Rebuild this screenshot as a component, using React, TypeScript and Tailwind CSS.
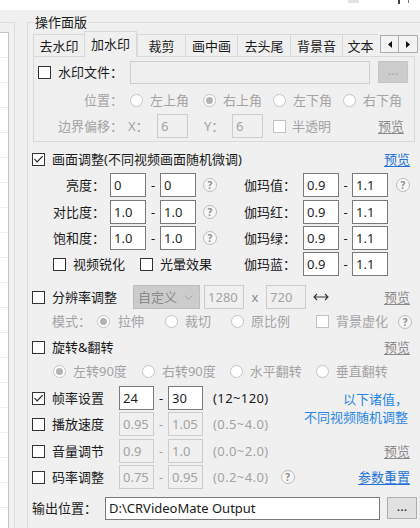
import React from 'react';

const FONT = "font-['Noto_Sans','Noto_Sans_CJK_SC',sans-serif]";

function Check({ checked = false, disabled = false }: { checked?: boolean; disabled?: boolean }) {
  return (
    <span className={`flex h-[13px] w-[13px] shrink-0 items-center justify-center border bg-white ${disabled ? 'border-[#c2c2c2]' : 'border-[#333333]'}`}>
      {checked && (
        <svg width="11" height="11" viewBox="0 0 11 11">
          <path d="M1.5 5.2 L4.2 8 L9.6 2.2" fill="none" stroke="#222" strokeWidth="1.2" />
        </svg>
      )}
    </span>
  );
}

function Radio({ on = false }: { on?: boolean }) {
  return (
    <span className="flex h-[13px] w-[13px] shrink-0 items-center justify-center rounded-full border border-[#c4c4c4] bg-white">
      {on && <span className="h-[7px] w-[7px] rounded-full bg-[#b3b3b3]" />}
    </span>
  );
}

function Help() {
  return (
    <span className="flex h-[14px] w-[14px] shrink-0 items-center justify-center rounded-full border border-[#bdbdbd] bg-[#f7f7f7] text-[10px] font-bold text-[#8c8c8c]">?</span>
  );
}

function Field({ v, className = '', dis = false }: { v: string; className?: string; dis?: boolean }) {
  return (
    <span
      className={`flex h-[24px] shrink-0 items-center border pl-[3px] ${
        dis ? 'border-[#cccccc] bg-[#f0f0f0] text-[#a3a3a3]' : 'border-[#7a7a7a] bg-white text-[#1f1f1f]'
      } ${className}`}
    >
      {v}
    </span>
  );
}

function Preview({ blue = false }: { blue?: boolean }) {
  return <span className={`ml-auto mr-[10px] underline underline-offset-2 ${blue ? 'text-[#1f74d6]' : 'text-[#8a8a8a]'}`}>预览</span>;
}

const tabs = [
  { name: '去水印', w: 'w-[51px]' },
  { name: '加水印', w: 'w-[53px]', on: true },
  { name: '裁剪', w: 'w-[48px]' },
  { name: '画中画', w: 'w-[52px]' },
  { name: '去头尾', w: 'w-[53px]' },
  { name: '背景音', w: 'w-[52px]' },
  { name: '文本', w: 'w-[36px]' },
];

const colorRows = [
  { a: '亮度：', a1: '0', a2: '0', b: '伽玛值：' },
  { a: '对比度：', a1: '1.0', a2: '1.0', b: '伽玛红：' },
  { a: '饱和度：', a1: '1.0', a2: '1.0', b: '伽玛绿：' },
];

function RangeRow({ label, v1, v2, range, on = false }: { label: string; v1: string; v2: string; range: string; on?: boolean }) {
  return (
    <>
      <Check checked={on} />
      <span className="ml-[7px] w-[52px]">{label}</span>
      <Field v={v1} dis={!on} className="ml-[15px] w-[35px]" />
      <span className={`w-[14px] text-center ${on ? '' : 'text-[#a3a3a3]'}`}>-</span>
      <Field v={v2} dis={!on} className="w-[35px]" />
      <span className={`ml-[10px] tracking-[0.4px] ${on ? '' : 'text-[#a3a3a3]'}`}>{range}</span>
    </>
  );
}

export default function App() {
  return (
    <div className={`relative flex h-[528px] w-[420px] flex-col overflow-hidden bg-[#f0f0f0] text-[13px] leading-none text-[#1a1a1a] ${FONT}`}>
      <div className="relative h-[10px] shrink-0 bg-white">
        <span className="absolute left-[348px] top-0 h-[3px] w-[11px] bg-[#e3e3e3]" />
        <span className="absolute left-[398px] top-0 h-[4px] w-[2px] bg-[#444444]" />
        <span className="absolute left-[408px] top-0 h-[3px] w-[1px] bg-[#777777]" />
      </div>

      <div className="flex flex-1 pt-[12px]">
        {/* left group with list */}
        <div className="w-[15px] shrink-0 border-r border-t border-[#dcdcdc] pt-[9px]">
          <div className="h-full w-[9px] overflow-hidden border-r border-t border-[#c4c4c4] bg-white">
            {Array.from({ length: 20 }).map((_, i) => (
              <div key={i} className="h-[25px] border-b border-[#ececec]" />
            ))}
          </div>
        </div>

        {/* 操作面版 group */}
        <div className="relative ml-[12px] flex flex-1 flex-col border-l border-t border-[#dcdcdc] pl-[4px] pt-[8px]">
          <span className="absolute left-[6px] top-[-9px] bg-[#f0f0f0] px-[1px] leading-[16px]">操作面版</span>

          {/* tabs */}
          <div className="ml-[1px] flex h-[25px] items-end">
            {tabs.map((t) =>
              t.on ? (
                <span key={t.name} className={`relative z-10 mb-[-1px] flex h-[26px] items-center justify-center border-x border-t border-[#d9d9d9] bg-[#f0f0f0] pb-[1px] ${t.w}`}>
                  {t.name}
                </span>
              ) : (
                <span key={t.name} className={`flex h-[22px] items-center justify-center border-l border-t border-[#d9d9d9] bg-[#f0f0f0] pt-[2px] ${t.w}`}>
                  {t.name}
                </span>
              ),
            )}
            <div className="mb-[3px] ml-[2px] flex self-end">
              <span className="flex h-[18px] w-[19px] items-center justify-center border border-[#adadad] bg-[#f3f3f3]">
                <svg width="4" height="7" viewBox="0 0 4 7">
                  <path d="M4 0 L0 3.5 L4 7 Z" fill="#111" />
                </svg>
              </span>
              <span className="flex h-[18px] w-[19px] items-center justify-center border border-l-0 border-[#adadad] bg-[#f3f3f3]">
                <svg width="4" height="7" viewBox="0 0 4 7">
                  <path d="M0 0 L4 3.5 L0 7 Z" fill="#111" />
                </svg>
              </span>
            </div>
          </div>

          {/* tab panel */}
          <div className="ml-[1px] flex h-[86px] w-[382px] flex-col border border-[#d9d9d9] pl-[4px] pt-[3px]">
            <div className="flex h-[24px] items-center">
              <Check />
              <span className="ml-[7px] w-[65px]">水印文件：</span>
              <span className="ml-[7px] h-[23px] w-[240px] border border-[#d0d0d0] bg-[#f0f0f0]" />
              <span className="ml-[8px] flex h-[22px] w-[30px] items-center justify-center border border-[#c4c4c4] bg-[#cccccc] pb-[3px] text-[#a8a8a8]">...</span>
            </div>
            <div className="mt-[4px] flex h-[24px] items-center text-[#a3a3a3]">
              <span className="w-[85px] text-right">位置：</span>
              <span className="ml-[7px] flex w-[73px] items-center gap-[7px]">
                <Radio />
                左上角
              </span>
              <span className="flex w-[70px] items-center gap-[7px]">
                <Radio on />
                右上角
              </span>
              <span className="flex w-[70px] items-center gap-[7px]">
                <Radio />
                左下角
              </span>
              <span className="flex items-center gap-[7px]">
                <Radio />
                右下角
              </span>
            </div>
            <div className="mt-[2px] flex h-[24px] items-center text-[#a3a3a3]">
              <span className="w-[85px] text-right">边界偏移：</span>
              <span className="ml-[5px] w-[29px]">X：</span>
              <Field v="6" dis className="h-[23px] w-[31px]" />
              <span className="ml-[16px] w-[28px]">Y：</span>
              <Field v="6" dis className="h-[23px] w-[31px]" />
              <span className="ml-[10px]">
                <Check disabled />
              </span>
              <span className="ml-[6px]">半透明</span>
              <Preview />
            </div>
          </div>

          {/* 画面调整 */}
          <div className="mt-[5px] flex h-[24px] items-center">
            <Check checked />
            <span className="ml-[7px]">画面调整(不同视频画面随机微调)</span>
            <Preview blue />
          </div>

          {colorRows.map((r, i) => (
            <div key={r.a} className={`flex h-[24px] items-center ${i === 0 ? 'mt-[2px]' : i === 1 ? 'mt-[3px]' : 'mt-[2px]'}`}>
              <div className="flex w-[212px] items-center">
                <span className="w-[73px] text-right">{r.a}</span>
                <Field v={r.a1} className="ml-[5px] w-[36px]" />
                <span className="w-[14px] text-center">-</span>
                <Field v={r.a2} className="w-[36px]" />
                <span className="ml-[7px]">
                  <Help />
                </span>
              </div>
              <span className="w-[52px] text-right">{r.b}</span>
              <Field v="0.9" className="ml-[7px] w-[36px]" />
              <span className="w-[13px] text-center">-</span>
              <Field v="1.1" className="w-[36px]" />
              {i === 0 && (
                <span className="ml-[8px]">
                  <Help />
                </span>
              )}
            </div>
          ))}

          <div className="mt-[2px] flex h-[24px] items-center">
            <div className="flex w-[212px] items-center">
              <span className="ml-[21px]">
                <Check />
              </span>
              <span className="ml-[7px]">视频锐化</span>
              <span className="ml-[15px]">
                <Check />
              </span>
              <span className="ml-[7px]">光暈效果</span>
            </div>
            <span className="w-[52px] text-right">伽玛蓝：</span>
            <Field v="0.9" className="ml-[7px] w-[36px]" />
            <span className="w-[13px] text-center">-</span>
            <Field v="1.1" className="w-[36px]" />
          </div>

          {/* 分辨率 */}
          <div className="mt-[9px] flex h-[24px] items-center">
            <Check />
            <span className="ml-[7px]">分辨率调整</span>
            <span className="ml-[16px] flex h-[24px] w-[67px] items-center justify-between border border-[#bcbcbc] bg-[#cccccc] pl-[4px] pr-[6px] text-[#8a8a8a]">
              自定义
              <svg width="9" height="5" viewBox="0 0 9 5">
                <path d="M0.5 0.5 L4.5 4.5 L8.5 0.5" fill="none" stroke="#a6a6a6" strokeWidth="1" />
              </svg>
            </span>
            <Field v="1280" dis className="ml-[4px] w-[40px]" />
            <span className="w-[22px] text-center text-[#8a8a8a]">x</span>
            <Field v="720" dis className="w-[40px]" />
            <svg className="ml-[7px]" width="16" height="8" viewBox="0 0 16 8">
              <path d="M1 4 H15 M4 1 L1 4 L4 7 M12 1 L15 4 L12 7" fill="none" stroke="#333" strokeWidth="1.1" />
            </svg>
            <Preview />
          </div>

          <div className="flex h-[25px] items-center text-[#a3a3a3]">
            <span className="ml-[20px]">模式：</span>
            <span className="ml-[6px]">
              <Radio on />
            </span>
            <span className="ml-[8px]">拉伸</span>
            <span className="ml-[21px]">
              <Radio />
            </span>
            <span className="ml-[7px]">裁切</span>
            <span className="ml-[20px]">
              <Radio />
            </span>
            <span className="ml-[7px]">原比例</span>
            <span className="ml-[26px]">
              <Check disabled />
            </span>
            <span className="ml-[7px]">背景虚化</span>
            <span className="ml-[10px]">
              <Help />
            </span>
          </div>

          {/* 旋转 */}
          <div className="mt-[1px] flex h-[24px] items-center">
            <Check />
            <span className="ml-[7px]">旋转&amp;翻转</span>
            <Preview />
          </div>
          <div className="flex h-[24px] items-center text-[#a3a3a3]">
            <span className="ml-[21px]">
              <Radio on />
            </span>
            <span className="ml-[7px]">左转90度</span>
            <span className="ml-[15px]">
              <Radio />
            </span>
            <span className="ml-[7px]">右转90度</span>
            <span className="ml-[14px]">
              <Radio />
            </span>
            <span className="ml-[7px]">水平翻转</span>
            <span className="ml-[14px]">
              <Radio />
            </span>
            <span className="ml-[7px]">垂直翻转</span>
          </div>

          {/* 帧率 / 播放 */}
          <div className="mt-[2px] flex">
            <div className="flex flex-col">
              <div className="flex h-[26px] items-center">
                <RangeRow label="帧率设置" v1="24" v2="30" range="(12~120)" on />
              </div>
              <div className="flex h-[26px] items-center">
                <RangeRow label="播放速度" v1="0.95" v2="1.05" range="(0.5~4.0)" />
              </div>
            </div>
            <div className="ml-auto mr-[12px] mt-[5px] flex flex-col items-end text-[#2b87e3]">
              <span className="leading-[18px]">以下诸值，</span>
              <span className="leading-[18px]">不同视频随机调整</span>
            </div>
          </div>
          <div className="mt-[1px] flex h-[26px] items-center">
            <RangeRow label="音量调节" v1="0.9" v2="1.0" range="(0.0~2.0)" />
            <Preview />
          </div>
          <div className="flex h-[26px] items-center">
            <RangeRow label="码率调整" v1="0.75" v2="0.95" range="(0.2~4.0)" />
            <span className="ml-[12px]">
              <Help />
            </span>
            <span className="ml-auto mr-[10px] text-[#1f74d6] underline underline-offset-2">参数重置</span>
          </div>

          {/* 输出 */}
          <div className="mt-[6px] flex h-[24px] items-center">
            <span className="w-[65px]">输出位置：</span>
            <span className="ml-[8px] flex h-[23px] w-[275px] items-center border border-[#7a7a7a] bg-white pl-[3px]">{'D:\\CRVideoMate Output'}</span>
            <span className="ml-[7px] flex h-[22px] w-[30px] items-center justify-center border border-[#adadad] bg-[#e1e1e1] pb-[3px]">...</span>
          </div>
        </div>
      </div>
    </div>
  );
}
